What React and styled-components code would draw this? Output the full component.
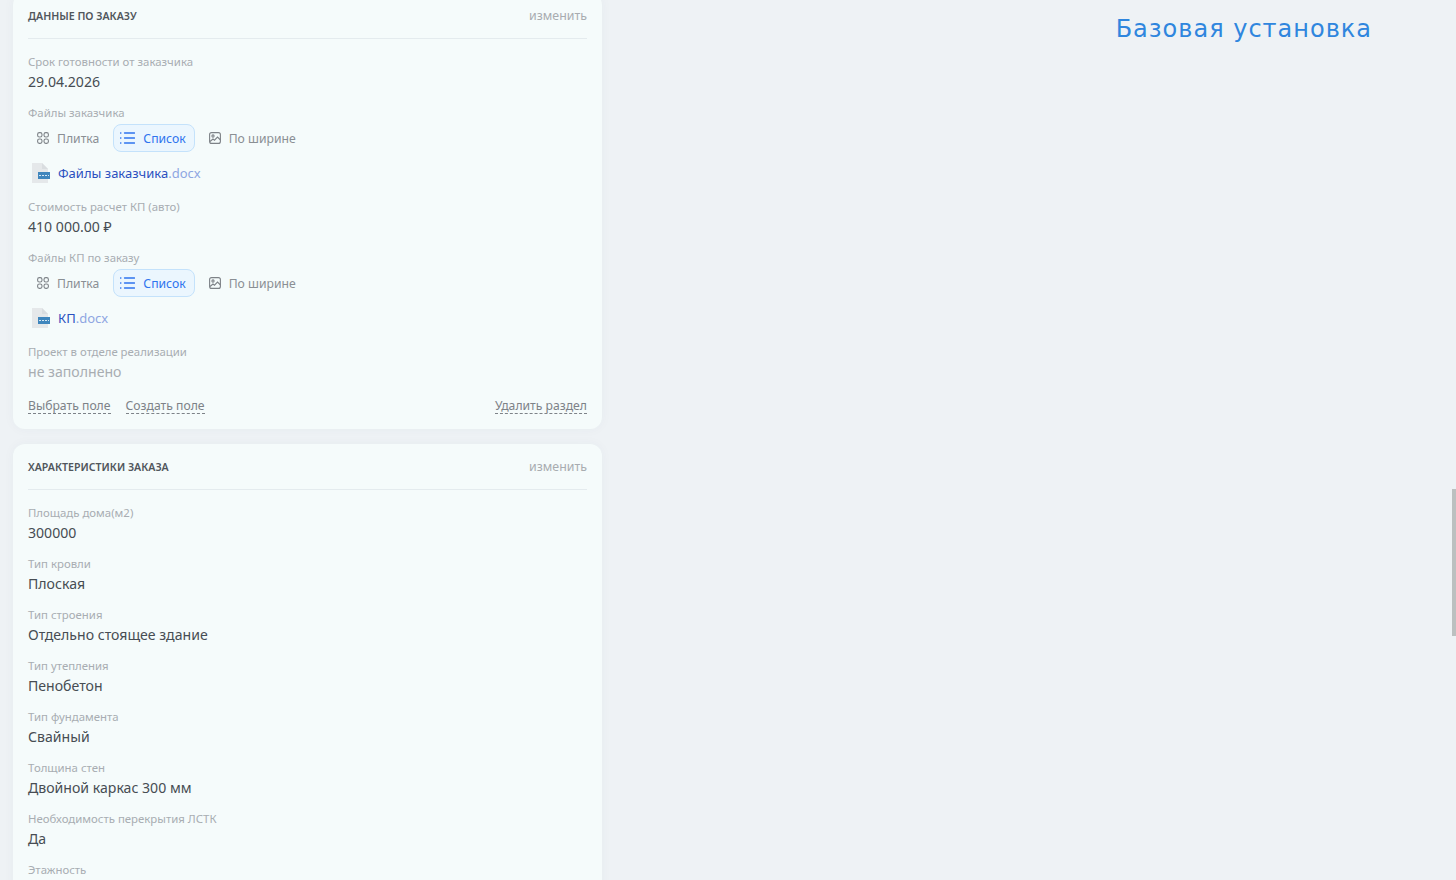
import React from 'react'
import styled, { createGlobalStyle } from 'styled-components'

const GlobalStyle = createGlobalStyle`
  html, body {
    margin: 0;
    height: 100%;
    overflow: hidden;
    background: #eef2f5;
    font-family: 'Noto Sans', sans-serif;
  }
`

const Page = styled.div`
  display: flex;
  align-items: flex-start;
  height: 880px;
  overflow: hidden;
  padding-left: 13px;
`

const LeftColumn = styled.div`
  width: 589px;
  flex-shrink: 0;
  margin-top: -7px;
  display: flex;
  flex-direction: column;
  gap: 15px;
`

const RightColumn = styled.div`
  flex: 1;
  display: flex;
  justify-content: flex-end;
  padding-right: 84px;
`

const InstallTitle = styled.h2`
  margin: 12px 0 0;
  font-family: 'DejaVu Sans', sans-serif;
  font-weight: 400;
  font-size: 24px;
  line-height: 34px;
  letter-spacing: 1px;
  color: #2f86de;
`

const Card = styled.section`
  background: #f5fbfb;
  border-radius: 12px;
  padding: 0 15px 15px;
  box-shadow: 0 0 12px rgba(60, 70, 90, 0.04);
`

const CardHead = styled.header`
  display: flex;
  align-items: center;
  justify-content: space-between;
  height: 45px;
  border-bottom: 1px solid #e4ebee;
  margin-bottom: 14px;
`

const CardTitle = styled.h3`
  margin: 0;
  font-size: 10.6px;
  font-weight: 600;
  color: #50565c;
  text-transform: uppercase;
`

const EditLink = styled.a`
  font-size: 12.4px;
  color: #a8acb0;
`

const Field = styled.div`
  margin-bottom: 11px;
`

const Label = styled.div`
  font-size: 11.4px;
  line-height: 18px;
  color: #a8adb2;
`

const Value = styled.div`
  font-size: 14.1px;
  line-height: 22px;
  color: ${({ $empty }) => ($empty ? '#a8adb2' : '#474d53')};
`

const ViewSwitch = styled.div`
  display: flex;
  gap: 5px;
  margin-top: 2px;
`

const ViewButton = styled.button`
  display: flex;
  align-items: center;
  gap: 8px;
  height: 28px;
  padding: ${({ $active }) => ($active ? '0 8px 0 6px' : '0 8px')};
  font: inherit;
  font-size: 12.2px;
  border: 1px solid ${({ $active }) => ($active ? '#c4e2fb' : 'transparent')};
  border-radius: 8px;
  background: ${({ $active }) => ($active ? '#ebf6fe' : 'transparent')};
  color: ${({ $active }) => ($active ? '#2f74ee' : '#8a8f94')};
  svg {
    flex-shrink: 0;
    color: ${({ $active }) => ($active ? '#2f74ee' : '#7d8287')};
  }
`

const FileRow = styled.div`
  display: flex;
  align-items: center;
  gap: 8px;
  height: 20px;
  margin: 11px 0 15px 4px;
`

const FileName = styled.a`
  font-size: 13px;
  color: #2b50bf;
`

const FileExt = styled.span`
  color: #8ea6e2;
`

const CardFoot = styled.footer`
  display: flex;
  gap: 15px;
  margin-top: 15px;
`

const DashedLink = styled.a`
  font-size: 12.2px;
  line-height: 15px;
  color: #7d8288;
  border-bottom: 1px dashed #7d8288;
  &:last-child {
    margin-left: auto;
  }
`

const ScrollThumb = styled.div`
  position: fixed;
  top: 489px;
  right: 0;
  width: 4px;
  height: 147px;
  background: #bcc0c0;
`

const TileIcon = () => (
  <svg width="12" height="12" viewBox="0 0 12 12" fill="none" stroke="currentColor" strokeWidth="1.1">
    <rect x="0.6" y="0.6" width="4.4" height="4.4" rx="1.8" />
    <rect x="7" y="0.6" width="4.4" height="4.4" rx="1.8" />
    <rect x="0.6" y="7" width="4.4" height="4.4" rx="1.8" />
    <rect x="7" y="7" width="4.4" height="4.4" rx="1.8" />
  </svg>
)

const ListIcon = () => (
  <svg width="15" height="12" viewBox="0 0 15 12" fill="none" stroke="currentColor" strokeWidth="1.3" strokeLinecap="round">
    <path d="M4.5 1h10M4.5 6h10M4.5 11h10" />
    <path d="M0.7 1h.1M0.7 6h.1M0.7 11h.1" strokeWidth="1.6" />
  </svg>
)

const PictureIcon = () => (
  <svg width="12" height="12" viewBox="0 0 12 12" fill="none" stroke="currentColor" strokeWidth="1.1">
    <rect x="0.6" y="0.6" width="10.8" height="10.8" rx="2" />
    <circle cx="4" cy="4" r="1.1" />
    <path d="M1 9.5l3-2.5 1.5 1.2L8.5 5l3 3" />
  </svg>
)

const DocIcon = () => (
  <svg width="18" height="20" viewBox="0 0 18 20">
    <path d="M0 0h10l6 6v14H0z" fill="#e5e8ea" />
    <path d="M10 0l6 6h-6z" fill="#d9dde0" />
    <rect x="6" y="9" width="12" height="7" fill="#3f86bd" />
    <path d="M7 12.5h10" stroke="#d5e7f3" strokeDasharray="2 1" />
  </svg>
)

const Views = () => (
  <ViewSwitch>
    <ViewButton><TileIcon />Плитка</ViewButton>
    <ViewButton $active><ListIcon />Список</ViewButton>
    <ViewButton><PictureIcon />По ширине</ViewButton>
  </ViewSwitch>
)

const specs = [
  ['Площадь дома(м2)', '300000'],
  ['Тип кровли', 'Плоская'],
  ['Тип строения', 'Отдельно стоящее здание'],
  ['Тип утепления', 'Пенобетон'],
  ['Тип фундамента', 'Свайный'],
  ['Толщина стен', 'Двойной каркас 300 мм'],
  ['Необходимость перекрытия ЛСТК', 'Да'],
  ['Этажность'],
]

export default function App() {
  return (
    <Page>
      <GlobalStyle />
      <LeftColumn>
        <Card>
          <CardHead>
            <CardTitle>Данные по заказу</CardTitle>
            <EditLink>изменить</EditLink>
          </CardHead>
          <Field>
            <Label>Срок готовности от заказчика</Label>
            <Value>29.04.2026</Value>
          </Field>
          <Label>Файлы заказчика</Label>
          <Views />
          <FileRow>
            <DocIcon />
            <FileName>Файлы заказчика<FileExt>.docx</FileExt></FileName>
          </FileRow>
          <Field>
            <Label>Стоимость расчет КП (авто)</Label>
            <Value>410 000.00 ₽</Value>
          </Field>
          <Label>Файлы КП по заказу</Label>
          <Views />
          <FileRow>
            <DocIcon />
            <FileName>КП<FileExt>.docx</FileExt></FileName>
          </FileRow>
          <Field>
            <Label>Проект в отделе реализации</Label>
            <Value $empty>не заполнено</Value>
          </Field>
          <CardFoot>
            <DashedLink>Выбрать поле</DashedLink>
            <DashedLink>Создать поле</DashedLink>
            <DashedLink>Удалить раздел</DashedLink>
          </CardFoot>
        </Card>
        <Card>
          <CardHead>
            <CardTitle>Характеристики заказа</CardTitle>
            <EditLink>изменить</EditLink>
          </CardHead>
          {specs.map(([label, value]) => (
            <Field key={label}>
              <Label>{label}</Label>
              {value && <Value>{value}</Value>}
            </Field>
          ))}
        </Card>
      </LeftColumn>
      <RightColumn>
        <InstallTitle>Базовая установка</InstallTitle>
      </RightColumn>
      <ScrollThumb />
    </Page>
  )
}
